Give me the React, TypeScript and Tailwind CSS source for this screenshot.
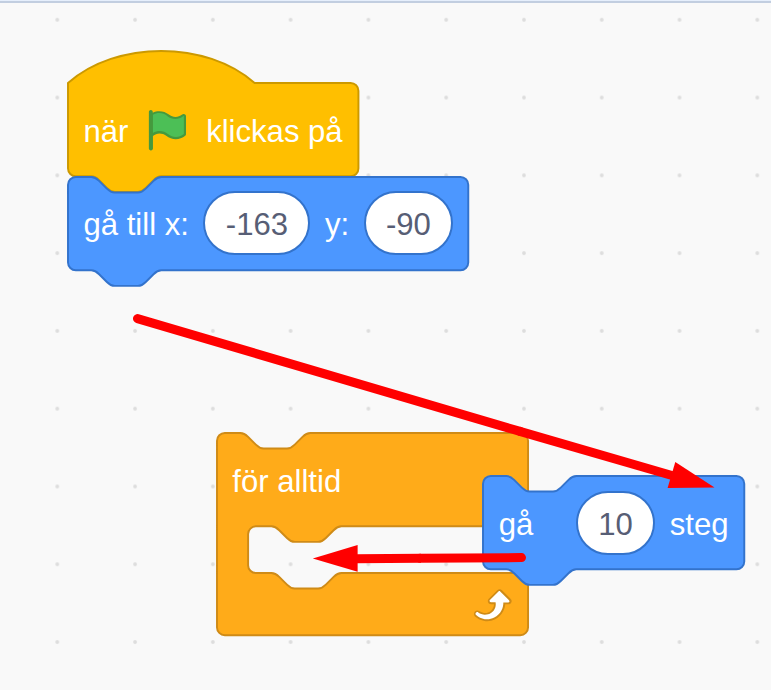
import type { ReactNode } from "react";

const NOTCH_RIGHT = "c2,0 3,1 4,2 l4,4 c1,1 2,2 4,2 h12 c2,0 3,-1 4,-2 l4,-4 c1,-1 2,-2 4,-2";
const NOTCH_LEFT = "c-2,0 -3,1 -4,2 l-4,4 c-1,1 -2,2 -4,2 h-12 c-2,0 -3,-1 -4,-2 l-4,-4 c-1,-1 -2,-2 -4,-2";

const hatPath = (w: number) =>
  `M0,0 c25,-22 71,-22 96,0 H${w - 4} a4,4 0 0,1 4,4 V44 a4,4 0 0,1 -4,4 H48 ${NOTCH_LEFT} H4 a4,4 0 0,1 -4,-4 z`;

const stackPath = (w: number) =>
  `M0,4 A4,4 0 0,1 4,0 H12 ${NOTCH_RIGHT} H${w - 4} a4,4 0 0,1 4,4 V44 a4,4 0 0,1 -4,4 H48 ${NOTCH_LEFT} H4 a4,4 0 0,1 -4,-4 z`;

const loopPath = (w: number) =>
  `M0,4 A4,4 0 0,1 4,0 H12 ${NOTCH_RIGHT} H${w - 4} a4,4 0 0,1 4,4 V44 a4,4 0 0,1 -4,4 H64 ${NOTCH_LEFT} h-8 a4,4 0 0,0 -4,4 v16 a4,4 0 0,0 4,4 h8 ${NOTCH_RIGHT} H${w - 4} a4,4 0 0,1 4,4 v24 a4,4 0 0,1 -4,4 H4 a4,4 0 0,1 -4,-4 z`;

function Shape({ d, className }: { d: string; className: string }) {
  return (
    <svg className="absolute inset-0 h-full w-full overflow-visible" aria-hidden="true">
      <path d={d} transform="scale(1.944)" strokeWidth="1" className={className} />
    </svg>
  );
}

function Row({ children }: { children: ReactNode }) {
  return (
    <div className="relative flex h-[93.3px] items-center gap-[15.5px] whitespace-nowrap pl-[15.5px] text-[31.1px] leading-none text-white">
      {children}
    </div>
  );
}

function Label({ children }: { children: ReactNode }) {
  return <span className="pt-[3px]">{children}</span>;
}

function NumberInput({ children, className }: { children: ReactNode; className: string }) {
  return (
    <span
      className={`-mx-px flex h-[64px] items-center justify-center rounded-full border-2 border-[#3373cc] bg-white text-[#575e75] ${className}`}
    >
      <Label>{children}</Label>
    </span>
  );
}

function FlagIcon() {
  return (
    <svg viewBox="0 0 24 24" className="size-[46.7px] shrink-0">
      <path
        fill="#45993d"
        d="M20.8,3.7c-0.4-0.2-0.9-0.1-1.2,0.2c-2,1.6-4.8,1.6-6.8,0c-2.3-1.9-5.6-2.3-8.3-1v-0.4c0-0.6-0.5-1-1-1s-1,0.4-1,1v18.8c0,0.5,0.5,1,1,1h0.1c0.5,0,1-0.5,1-1v-6.4c1-0.7,2.1-1.2,3.4-1.3c1.2,0,2.4,0.4,3.4,1.2c2.9,2.3,7,2.3,9.8,0c0.3-0.2,0.4-0.5,0.4-0.9V4.7C21.6,4.2,21.3,3.8,20.8,3.7z"
      />
      <path
        fill="#4cbf56"
        d="M20.5,13.9c-2.4,2-5.8,2-8.2,0c-2.2-1.8-5.3-2-7.7-0.5V4c2.4-1.4,5.4-1.1,7.5,0.7c2.3,1.9,5.7,1.9,8,0c0.3-0.2,0.4-0.1,0.4,0.2z"
      />
    </svg>
  );
}

function RepeatIcon() {
  return (
    <svg viewBox="0 0 24 24" className="size-[46.7px] shrink-0">
      <path
        fill="#cf8b17"
        d="M23.3,11c-0.3,0.6-0.9,1-1.5,1h-1.6c-0.1,1.3-0.5,2.5-1.1,3.6c-0.9,1.7-2.3,3.2-4.1,4.1c-1.7,0.9-3.6,1.2-5.5,0.9c-1.8-0.3-3.5-1.1-4.9-2.3c-0.7-0.7-0.7-1.9,0-2.6c0.6-0.6,1.6-0.7,2.3-0.2H7c0.9,0.6,1.9,0.9,2.9,0.9s1.9-0.3,2.7-0.9c1.1-0.8,1.8-2.1,1.8-3.5h-1.5c-0.9,0-1.7-0.7-1.7-1.7c0-0.4,0.2-0.9,0.5-1.2l4.4-4.4c0.7-0.6,1.7-0.6,2.4,0L23,9.2C23.5,9.7,23.6,10.4,23.3,11z"
      />
      <path
        fill="#fff"
        d="M21.8,11h-2.6c0,1.5-0.3,2.9-1,4.2c-0.8,1.6-2.1,2.8-3.7,3.6c-1.5,0.8-3.3,1.1-4.9,0.8c-1.6-0.2-3.2-1-4.4-2.1c-0.4-0.3-0.4-0.9-0.1-1.2c0.3-0.4,0.9-0.4,1.2-0.1l0,0c1,0.7,2.2,1.1,3.4,1.1s2.3-0.3,3.3-1c0.9-0.6,1.6-1.5,2-2.6c0.3-0.9,0.4-1.8,0.2-2.8h-2.4c-0.4,0-0.7-0.3-0.7-0.7c0-0.2,0.1-0.3,0.2-0.4l4.4-4.4c0.3-0.3,0.7-0.3,0.9,0L22,9.8c0.3,0.3,0.4,0.6,0.3,0.9S22,11,21.8,11z"
      />
    </svg>
  );
}

function GridDots() {
  return (
    <svg className="absolute inset-0 h-full w-full" aria-hidden="true">
      <defs>
        <pattern id="dots" x="18.4" y="-19.1" width="77.78" height="77.78" patternUnits="userSpaceOnUse">
          <circle cx="38.9" cy="38.9" r="1.9" fill="#dddddd" />
        </pattern>
      </defs>
      <rect width="100%" height="100%" fill="url(#dots)" />
    </svg>
  );
}

function Arrows() {
  return (
    <svg className="pointer-events-none absolute inset-0 h-full w-full" fill="#ff0000" stroke="#ff0000" aria-hidden="true">
      <path d="M137.5,318.6 L520,431.4" strokeWidth="9" strokeLinecap="round" />
      <path d="M519,431.1 L672,475.5" strokeWidth="9" />
      <path d="M675.3,462 L714.5,487.6 L667.6,488 z" stroke="none" />
      <path d="M521.5,557.6 L420,558.2" strokeWidth="9" strokeLinecap="round" />
      <path d="M421,558.2 L356,558.7" strokeWidth="9" />
      <path d="M357.6,545 V571.8 L312.8,558.5 z" stroke="none" />
    </svg>
  );
}

export default function App() {
  return (
    <main className="relative h-[690px] w-[771px] overflow-hidden bg-[#f9f9f9] font-['Liberation_Sans',Arial,sans-serif]">
      <GridDots />
      <div className="relative h-[3px] border-b-2 border-[#c2cee0] bg-[#e6effc]" />

      <section className="absolute left-[68px] top-[83.4px]">
        <div className="relative">
          <Shape d={hatPath(149.4)} className="fill-[#ffbf00] stroke-[#cc9900]" />
          <Row>
            <Label>när</Label>
            <FlagIcon />
            <Label>klickas på</Label>
          </Row>
        </div>
        <div className="relative">
          <Shape d={stackPath(205.9)} className="fill-[#4c97ff] stroke-[#3373cc]" />
          <Row>
            <Label>gå till x:</Label>
            <NumberInput className="w-[107px]">-163</NumberInput>
            <Label>y:</Label>
            <NumberInput className="w-[89.5px]">-90</NumberInput>
          </Row>
        </div>
      </section>

      <section className="absolute left-[216.8px] top-[433.4px] w-[311.2px]">
        <Shape d={loopPath(160)} className="fill-[#ffab19] stroke-[#cf8b17]" />
        <Row>
          <Label>för alltid</Label>
        </Row>
        <div className="relative flex justify-end pr-[15.5px] pt-[54.2px]">
          <RepeatIcon />
        </div>
      </section>

      <section className="absolute left-[483.2px] top-[476.4px] w-[261px]">
        <Shape d={stackPath(134.4)} className="fill-[#4c97ff] stroke-[#3373cc]" />
        <Row>
          <Label>gå</Label>
          <NumberInput className="ml-[27px] w-[79.5px]">10</NumberInput>
          <Label>steg</Label>
        </Row>
      </section>

      <Arrows />
    </main>
  );
}
